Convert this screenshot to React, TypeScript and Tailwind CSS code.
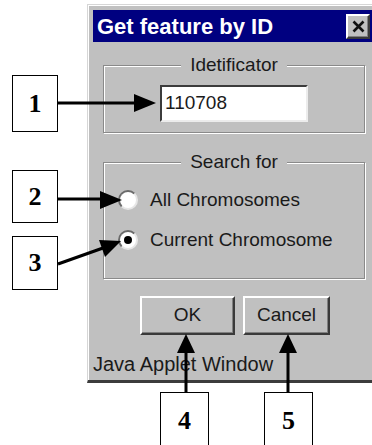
import React from "react";

function GroupBox({ title, className = "", children }: { title: string; className?: string; children: React.ReactNode }) {
  return (
    <div className={`border border-[#8a8a8a] shadow-[1px_1px_0_#fff,inset_1px_1px_0_#fff] ${className}`}>
      <div className="mx-auto -mt-[9px] w-fit bg-[#c0c0c0] px-[9px] text-[19px] leading-4 text-[#1a1a1a]">{title}</div>
      {children}
    </div>
  );
}

function Radio({ label, checked }: { label: string; checked?: boolean }) {
  return (
    <div className="flex h-6 items-center gap-3">
      <span className="flex h-5 w-5 items-center justify-center rounded-full border-2 border-t-[#6a6a6a] border-l-[#6a6a6a] border-b-[#e6e6e6] border-r-[#e6e6e6] bg-white">
        {checked && <span className="h-2 w-2 rounded-full bg-black" />}
      </span>
      <span className="text-[19px] leading-5 text-[#1a1a1a]">{label}</span>
    </div>
  );
}

function Button({ label, width }: { label: string; width: string }) {
  return (
    <div
      className={`flex h-[39px] ${width} items-center justify-center border-2 border-t-white border-l-white border-b-[#3a3a3a] border-r-[#3a3a3a] bg-[#c0c0c0] shadow-[inset_-1px_-1px_0_#808080] text-[19px] text-[#1a1a1a]`}
    >
      {label}
    </div>
  );
}

function Callout({ n, className }: { n: string; className: string }) {
  return (
    <div
      className={`absolute flex items-center justify-center border-[1.5px] border-black bg-white font-['Liberation_Serif',serif] text-[26px] font-bold leading-none text-black ${className}`}
    >
      {n}
    </div>
  );
}

export default function App() {
  return (
    <div className="relative h-[445px] w-[372px] overflow-hidden bg-white font-['Liberation_Sans',Arial,sans-serif]">
      {/* Dialog window */}
      <div className="ml-[87px] mt-[4px] h-[379px] w-[285px] border-l border-t border-b-[3px] border-l-[#d6d6d6] border-t-[#d6d6d6] border-b-[#3c3c3c] bg-[#c0c0c0] pl-[5px] pt-[5px] shadow-[inset_1px_1px_0_#fff]">
        {/* Title bar */}
        <div className="flex h-[32px] items-center justify-between bg-[#000080] pl-1 pr-[2px]">
          <span className="text-[22px] font-bold text-white">Get feature by ID</span>
          <div className="flex h-[25px] w-[24px] items-center justify-center border-2 border-t-white border-l-white border-b-[#3a3a3a] border-r-[#3a3a3a] bg-[#c0c0c0] shadow-[inset_-1px_-1px_0_#808080]">
            <svg width="13" height="13" viewBox="0 0 13 13">
              <path d="M1.5 1.5 L11.5 11.5 M11.5 1.5 L1.5 11.5" stroke="#111" strokeWidth="2.6" />
            </svg>
          </div>
        </div>

        <GroupBox title="Idetificator" className="ml-[10px] mr-[7px] mt-[23px] pb-[10px]">
          <div className="mx-auto mt-[12px] flex h-[37px] w-[148px] items-center border-2 border-t-[#3c3c3c] border-l-[#3c3c3c] border-b-[#ececec] border-r-[#ececec] bg-white pl-[3px] text-[19px] text-[#1a1a1a]">
            110708
          </div>
        </GroupBox>

        <GroupBox title="Search for" className="ml-[10px] mr-[7px] mt-[29px] pb-[26px]">
          <div className="mt-[18px] flex flex-col gap-4 pl-[14px]">
            <Radio label="All Chromosomes" />
            <Radio label="Current Chromosome" checked />
          </div>
        </GroupBox>

        <div className="ml-[47px] mt-[17px] flex gap-2">
          <Button label="OK" width="w-[95px]" />
          <Button label="Cancel" width="w-[87px]" />
        </div>

        <div className="mt-[19px] text-[20px] leading-5 text-[#1a1a1a]">Java Applet Window</div>
      </div>

      {/* Callout labels */}
      <Callout n="1" className="left-[12px] top-[75px] h-[57px] w-[46px]" />
      <Callout n="2" className="left-[12px] top-[170px] h-[53px] w-[46px]" />
      <Callout n="3" className="left-[12px] top-[236px] h-[54px] w-[46px]" />
      <Callout n="4" className="left-[160px] top-[392px] h-[58px] w-[49px]" />
      <Callout n="5" className="left-[264px] top-[392px] h-[58px] w-[49px]" />

      {/* Arrows */}
      <svg className="pointer-events-none absolute inset-0" width="372" height="445" viewBox="0 0 372 445">
        <g stroke="#000" strokeWidth="3" fill="none">
          <path d="M58 103 H137" />
          <path d="M58 199 H103" />
          <path d="M58 264 L103 248" />
          <path d="M186 392 V350" />
          <path d="M288 392 V350" />
        </g>
        <g fill="#000">
          <polygon points="134,94 156,103 134,112" />
          <polygon points="100,191 122,200 100,209" />
          <polygon points="105,257 121,241 99,240" />
          <polygon points="177,353 186,334 195,353" />
          <polygon points="279,353 288,334 297,353" />
        </g>
      </svg>
    </div>
  );
}
